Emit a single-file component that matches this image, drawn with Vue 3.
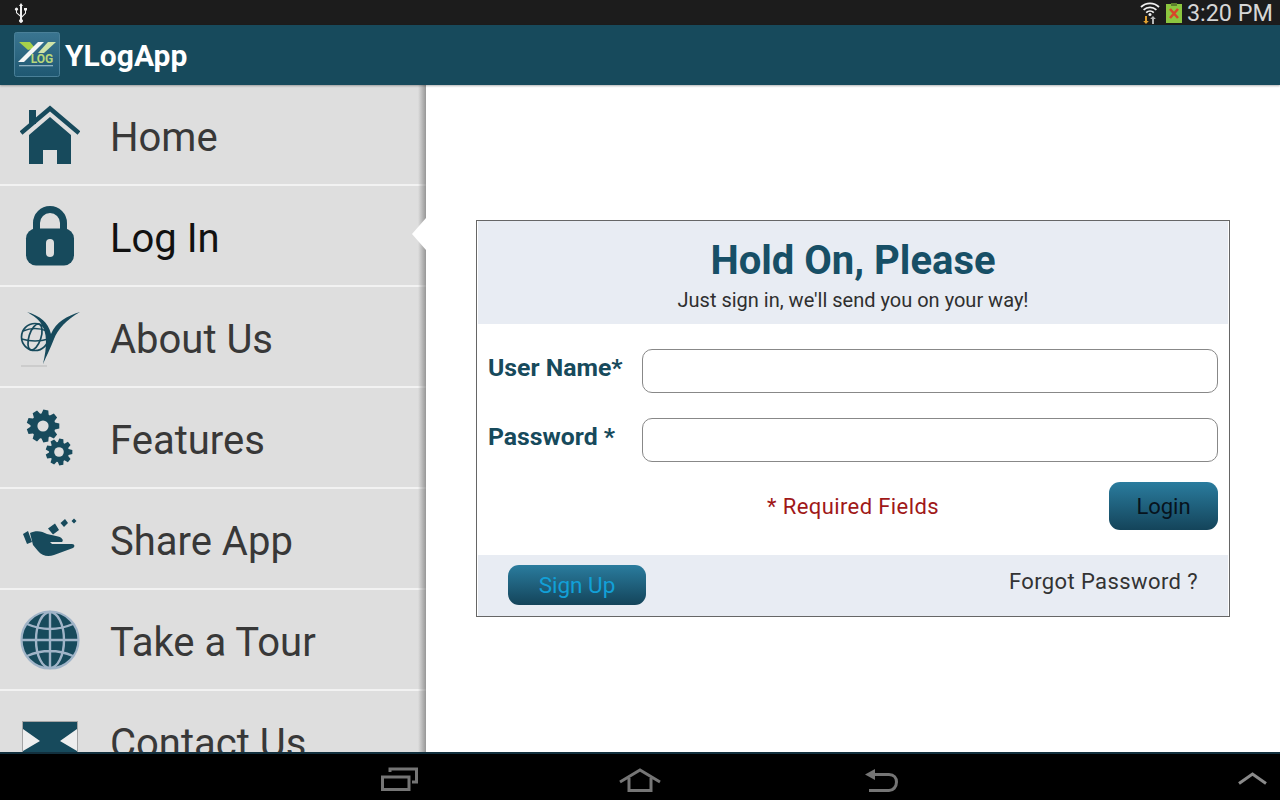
<script setup>
const menu = [
  { label: 'Home', icon: 'home' },
  { label: 'Log In', icon: 'lock', active: true },
  { label: 'About Us', icon: 'about' },
  { label: 'Features', icon: 'gears' },
  { label: 'Share App', icon: 'share' },
  { label: 'Take a Tour', icon: 'globe' },
  { label: 'Contact Us', icon: 'mail' }
]

// teeth for the two gears of the Features icon
function gear(cx, cy, outer, inner, teeth) {
  const step = (Math.PI * 2) / teeth
  const pts = []
  for (let i = 0; i < teeth; i++) {
    const a = i * step
    const at = (r, o) => `${(cx + Math.cos(a + o) * r).toFixed(2)} ${(cy + Math.sin(a + o) * r).toFixed(2)}`
    pts.push(at(inner, -step * 0.42), at(outer, -step * 0.22), at(outer, step * 0.22), at(inner, step * 0.42))
  }
  return 'M' + pts.join('L') + 'Z'
}
</script>

<template>
  <div class="screen">
    <div class="status-bar">
      <svg class="usb" width="14" height="20" viewBox="0 0 14 20">
        <path d="M7 0 L9 3 H8 V13 L11 10 V7.5 H10 V5 H13 V7.5 H12 V10.5 L8 14.5 V16.2 A1.9 1.9 0 1 1 6 16.2 V13.5 L2 10 V7.6 A1.5 1.5 0 1 1 3 7.6 V9.5 L6 12 V3 H5 Z" fill="#f2f2f2" />
      </svg>
      <div class="status-right">
        <svg width="20" height="23" viewBox="0 0 20 23">
          <path d="M1 6 A13 13 0 0 1 19 6 M3.6 8.8 A9.5 9.5 0 0 1 16.4 8.8 M6.2 11.6 A5.6 5.6 0 0 1 13.8 11.6" fill="none" stroke="#f0f0f0" stroke-width="1.8" />
          <circle cx="10" cy="13.6" r="1.5" fill="#f0f0f0" />
          <path d="M5 15 H7 V20 H8.8 L6 23 L3.2 20 H5 Z" fill="#e0a030" />
          <path d="M13 15 L15.8 18 H14 V23 H12 V18 H10.2 Z" fill="#b8b8b8" />
        </svg>
        <svg class="battery" width="16" height="20" viewBox="0 0 16 20">
          <rect x="0" y="1" width="16" height="19" fill="#8cc63f" />
          <rect x="5" y="0" width="6" height="3" fill="#5d7f2c" />
          <path d="M4 6 L12 15 M12 6 L4 15" stroke="#d8452a" stroke-width="2.6" />
        </svg>
        <span class="clock">3:20 PM</span>
      </div>
    </div>

    <header class="app-bar">
      <svg class="logo" width="46" height="46" viewBox="0 0 46 46">
        <defs>
          <linearGradient id="logoBg" x1="0" y1="0" x2="0" y2="1">
            <stop offset="0" stop-color="#3a7590" />
            <stop offset="1" stop-color="#1f5872" />
          </linearGradient>
        </defs>
        <rect x="0.5" y="0.5" width="45" height="44" rx="2" fill="url(#logoBg)" stroke="#4a8098" />
        <path d="M5 10 H16 L21 16 L14 18 Z" fill="#a7d14a" />
        <path d="M4 30 L24 10 H30 L10 30 Z" fill="#f4f6f6" />
        <path d="M34 10 H42 L30 21 H24 Z" fill="#cfe3a8" />
        <text x="28" y="31" class="logo-text" text-anchor="middle">LOG</text>
        <rect x="5" y="33" width="34" height="1.3" fill="#8fb2c2" />
      </svg>
      <span class="app-title">YLogApp</span>
    </header>

    <div class="body">
      <nav class="sidebar">
        <div v-for="item in menu" :key="item.label" class="row" :class="{ active: item.active }">
          <svg class="row-icon" width="60" height="60" viewBox="0 0 60 60">
            <g v-if="item.icon === 'home'" fill="#174a5c">
              <rect x="9" y="5" width="7" height="14" />
              <path d="M1 28 L30 3.5 L59 28" fill="none" stroke="#174a5c" stroke-width="4.5" />
              <path d="M9 30 L30 12 L51 30 V59 H37 V45 H23 V59 H9 Z" />
            </g>
            <g v-else-if="item.icon === 'lock'">
              <path d="M16.5 24 V17 A13.5 13.5 0 0 1 43.5 17 V24" fill="none" stroke="#174a5c" stroke-width="7" />
              <rect x="6" y="22.5" width="48" height="37" rx="10" fill="#174a5c" />
              <rect x="26" y="33" width="8" height="18" rx="4" fill="#dedede" />
            </g>
            <g v-else-if="item.icon === 'about'">
              <g fill="none" stroke="#174a5c" stroke-width="1.7">
                <circle cx="15" cy="30" r="13.5" />
                <ellipse cx="15" cy="30" rx="6" ry="13.5" transform="rotate(18 15 30)" />
                <path d="M3 24 Q15 19 27 24 M1.6 32 Q15 36 28.5 32" />
              </g>
              <path d="M7 5 C20 9 28 15 31 27 C36 15 47 9 60 5 C46 13 38 22 34 32 C30 42 26 50 23 57 C27 40 28 25 20 15 C16 10 12 8 7 5 Z" fill="#174a5c" />
              <rect x="1" y="58.5" width="26" height="1" fill="#b9b9b9" />
            </g>
            <g v-else-if="item.icon === 'gears'" fill="#174a5c">
              <path :d="gear(23, 18, 16.5, 12.5, 9)" />
              <circle cx="23" cy="18" r="5.6" fill="#dedede" />
              <path :d="gear(39, 44, 13.5, 10, 9)" />
              <circle cx="39" cy="44" r="4.8" fill="#dedede" />
            </g>
            <g v-else-if="item.icon === 'share'" fill="#174a5c">
              <path d="M3 25 L8 22 L12 33 L7 35 Z" />
              <path d="M10 24 C16 21 22 22 27 25 L36 27 C42 28 44 31 42 33 L30 33 L32 35 L52 35 C55 35 55 38 53 39 L34 46 C28 48 22 47 18 42 L13 36 Z" />
              <path d="M35 14.5 L39 21 L33 25.5 L28 19.5 Z M45 10 L48 14 L44 18 L40.5 14 Z M54 9.5 L56.5 12 L54 14.5 L51.5 12 Z" />
            </g>
            <g v-else-if="item.icon === 'globe'">
              <circle cx="30" cy="30" r="28.5" fill="#174a5c" stroke="#a0b4c8" stroke-width="2.2" />
              <g fill="none" stroke="#a0b4c8" stroke-width="2.4">
                <ellipse cx="30" cy="30" rx="14" ry="28" />
                <path d="M30 2 V58 M2 30 H58 M7 14 Q30 24 53 14 M7 46 Q30 36 53 46" />
              </g>
            </g>
            <g v-else>
              <rect x="2.5" y="10.5" width="55" height="58" fill="#174a5c" stroke="#a5a5a5" />
              <path d="M3 18 L20 30 L3 40 Z M57 18 L40 30 L57 40 Z" fill="#eeeeee" />
            </g>
          </svg>
          <span class="row-label">{{ item.label }}</span>
          <span v-if="item.active" class="pointer"></span>
        </div>
        <div class="edge-shade"></div>
      </nav>

      <main class="content">
        <section class="card">
          <div class="card-head">
            <h1>Hold On, Please</h1>
            <p>Just sign in, we'll send you on your way!</p>
          </div>
          <div class="card-form">
            <div class="field">
              <label>User Name*</label>
              <input type="text" />
            </div>
            <div class="field">
              <label>Password *</label>
              <input type="password" />
            </div>
            <div class="actions">
              <span></span>
              <span class="required">* Required Fields</span>
              <button class="btn btn-login">Login</button>
            </div>
          </div>
          <div class="card-foot">
            <button class="btn btn-signup">Sign Up</button>
            <span class="forgot">Forgot Password ?</span>
          </div>
        </section>
      </main>
    </div>

    <footer class="nav-bar">
      <svg class="nav-recent" width="37" height="24" viewBox="0 0 37 24">
        <path d="M1.5 10 H28 V22.5 H1.5 Z M9 5 V2 H35.5 V15 H31" fill="none" stroke="#757575" stroke-width="3" />
      </svg>
      <svg class="nav-home" width="42" height="24" viewBox="0 0 42 24">
        <path d="M1 14 L21 2 L41 14 M10 10 V22.5 H32 V10" fill="none" stroke="#757575" stroke-width="3" />
      </svg>
      <svg class="nav-back" width="33" height="23" viewBox="0 0 33 23">
        <path d="M0 5.5 L10 0 V11 Z" fill="#757575" />
        <path d="M8 5.5 H24 C29 5.5 31.5 9 31.5 13 C31.5 18 28 21.5 24 21.5 H4" fill="none" stroke="#757575" stroke-width="3" />
      </svg>
      <svg class="nav-up" width="29" height="13" viewBox="0 0 29 13">
        <path d="M1 11.5 L14.5 2 L28 11.5" fill="none" stroke="#8a8a8a" stroke-width="3" />
      </svg>
    </footer>
  </div>
</template>

<style scoped>
.screen {
  width: 1280px;
  height: 800px;
  display: flex;
  flex-direction: column;
  overflow: hidden;
  background: #fff;
  font-family: Roboto, "Liberation Sans", sans-serif;
}

.status-bar {
  height: 25px;
  flex-shrink: 0;
  display: flex;
  align-items: center;
  justify-content: space-between;
  padding: 0 7px 0 14px;
  background: #1c1c1c;
}

.status-right {
  display: flex;
  align-items: center;
}

.battery {
  margin-left: 6px;
}

.clock {
  margin-left: 5px;
  padding-top: 2px;
  font-size: 23.4px;
  line-height: 23px;
  color: #d6d6d6;
}

.app-bar {
  height: 60px;
  flex-shrink: 0;
  display: flex;
  align-items: center;
  padding-left: 14px;
  background: #174a5c;
  position: relative;
  z-index: 2;
  box-shadow: 0 1px 2px rgba(0, 0, 0, 0.3);
}

.logo-text {
  font-size: 12px;
  font-weight: 700;
  fill: #b7d77a;
}

.app-title {
  margin-left: 5px;
  font-size: 30px;
  font-weight: 700;
  color: #fff;
}

.body {
  flex: 1;
  min-height: 0;
  display: flex;
}

.sidebar {
  width: 426px;
  flex-shrink: 0;
  position: relative;
  overflow: hidden;
  background: #dedede;
}

.row {
  height: 101px;
  box-sizing: border-box;
  display: flex;
  align-items: center;
  padding-left: 20px;
  border-bottom: 2px solid #f2f2f2;
  position: relative;
}

.row-icon {
  flex-shrink: 0;
}

.row-label {
  margin-left: 30px;
  padding-top: 6px;
  font-size: 40px;
  color: #383838;
}

.row.active .row-label {
  color: #111;
}

.pointer {
  position: absolute;
  right: 0;
  top: 32px;
  width: 14px;
  height: 32px;
  background: #fff;
  clip-path: polygon(100% 0, 0 50%, 100% 100%);
  z-index: 2;
}

.edge-shade {
  position: absolute;
  top: 0;
  right: 0;
  bottom: 0;
  width: 8px;
  background: linear-gradient(to right, rgba(120, 120, 120, 0), rgba(120, 120, 120, 0.7));
}

.content {
  flex: 1;
  display: flex;
  align-items: center;
  justify-content: center;
}

.card {
  width: 754px;
  height: 397px;
  box-sizing: border-box;
  display: flex;
  flex-direction: column;
  border: 1px solid #666;
  padding: 0 1px;
}

.card-head {
  height: 103px;
  flex-shrink: 0;
  box-sizing: border-box;
  padding-top: 17px;
  text-align: center;
  background: #e8ecf3;
}

.card-head h1 {
  margin: 0;
  font-size: 40px;
  line-height: 46px;
  font-weight: 700;
  color: #174f66;
}

.card-head p {
  margin: 4px 0 0;
  font-size: 20px;
  line-height: 24px;
  color: #2f2f2f;
}

.card-form {
  flex: 1;
  padding: 25px 10px 0;
}

.field {
  display: flex;
  margin-bottom: 25px;
}

.field label {
  width: 154px;
  flex-shrink: 0;
  font-size: 24.8px;
  line-height: 38px;
  font-weight: 700;
  color: #174a5c;
}

.field input {
  flex: 1;
  height: 44px;
  box-sizing: border-box;
  border: 1px solid #888;
  border-radius: 10px;
  background: #fff;
}

.actions {
  display: grid;
  grid-template-columns: 1fr auto 1fr;
  align-items: center;
  margin-top: -5px;
}

.required {
  font-size: 22px;
  letter-spacing: 0.4px;
  color: #a01818;
}

.btn {
  border: none;
  border-radius: 11px;
  font-family: inherit;
  background: linear-gradient(to bottom, #2a7c9e, #14445a);
}

.btn-login {
  justify-self: end;
  width: 109px;
  height: 48px;
  font-size: 22px;
  color: #07131d;
}

.card-foot {
  height: 61px;
  flex-shrink: 0;
  box-sizing: border-box;
  display: flex;
  align-items: flex-start;
  justify-content: space-between;
  padding: 10px 30px 0;
  background: #e8ecf3;
}

.btn-signup {
  width: 138px;
  height: 40px;
  font-size: 22.5px;
  color: #12a0d8;
}

.forgot {
  font-size: 22px;
  line-height: 34px;
  letter-spacing: 0.4px;
  color: #333;
}

.nav-bar {
  height: 48px;
  flex-shrink: 0;
  box-sizing: border-box;
  display: flex;
  align-items: flex-start;
  padding-left: 381px;
  background: #000;
  border-top: 2px solid #12303e;
  position: relative;
  z-index: 2;
}

.nav-recent {
  margin-top: 13px;
}

.nav-home {
  margin-top: 14px;
  margin-left: 201px;
}

.nav-back {
  margin-top: 15px;
  margin-left: 204px;
}

.nav-up {
  margin-top: 18px;
  margin-left: 340px;
}
</style>
